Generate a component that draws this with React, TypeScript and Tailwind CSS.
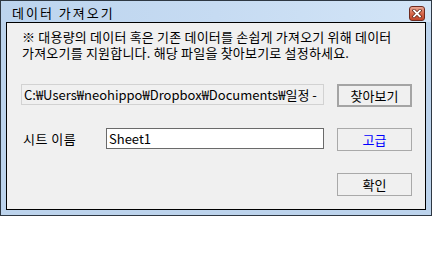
import React from "react";

const font = "font-['Noto_Sans_CJK_KR','Noto_Sans',sans-serif]";

function CloseButton() {
  return (
    <div className="w-[16px] h-[15px] rounded-[3px] border border-[#6e2a1e] bg-gradient-to-b from-[#e9a693] via-[#d6694d] to-[#c0452a] flex items-center justify-center">
      <svg width="10" height="9" viewBox="0 0 10 9">
        <path d="M2 1.5 L8 7.5 M8 1.5 L2 7.5" stroke="#5a2014" strokeWidth="3.2" strokeLinecap="square" />
        <path d="M2 1.5 L8 7.5 M8 1.5 L2 7.5" stroke="#ffffff" strokeWidth="1.8" strokeLinecap="square" />
      </svg>
    </div>
  );
}

function WinButton({ label, thick, blue }: { label: string; thick?: boolean; blue?: boolean }) {
  return (
    <button
      className={`w-[75px] h-[23px] bg-[#f0f0f0] flex items-center justify-center text-[13px] leading-[15px] ${
        thick ? "border-2 border-[#a4a4a4]" : "border border-[#a9a9a9]"
      } ${blue ? "text-[#0000ff]" : "text-black"}`}
    >
      {label}
    </button>
  );
}

export default function App() {
  return (
    <div className={`w-[432px] h-[276px] bg-white ${font}`}>
      <div className="w-[432px] h-[216px] border border-[#2e3843] bg-[#bcd3ec] flex flex-col">
        {/* title bar */}
        <div className="h-[21px] flex items-center justify-between pl-[11px] pr-[6px] bg-gradient-to-r from-[#bcd4ee] via-[#c6dbf2] to-[#d3e5f7]">
          <span className="text-[13px] leading-[15px] tracking-[2px] text-black pt-[1px]">데이터 가져오기</span>
          <div className="pt-[4px]">
            <CloseButton />
          </div>
        </div>

        {/* client area */}
        <div className="mx-[5px] mb-[5px] h-[188px] border border-black bg-[#f0f0f0] flex flex-col text-black">
          <div className="pl-[15px] pt-[6px] text-[13px] leading-[16px] tracking-[0.2px]">
            <div>※ 대용량의 데이터 혹은 기존 데이터를 손쉽게 가져오기 위해 데이터</div>
            <div>가져오기를 지원합니다. 해당 파일을 찾아보기로 설정하세요.</div>
          </div>

          <div className="mt-[23px] pl-[14px] flex items-start gap-[13px]">
            <div className="w-[303px] h-[21px] border border-[#d2d2d2] bg-[#f0f0f0] px-[2px] flex items-center overflow-hidden whitespace-nowrap text-[13px] leading-[15px]">
              C:₩Users₩neohippo₩Dropbox₩Documents₩일정 -
            </div>
            <WinButton label="찾아보기" thick />
          </div>

          <div className="mt-[21px] pl-[14px] flex items-start">
            <span className="w-[85px] h-[21px] pl-[2px] flex items-center text-[13px] leading-[15px] tracking-[0.5px]">시트 이름</span>
            <div className="w-[218px] h-[21px] border border-[#6a6a6a] bg-white px-[2px] flex items-center text-[13px] leading-[15px]">
              Sheet1
            </div>
            <div className="ml-[13px]">
              <WinButton label="고급" blue />
            </div>
          </div>

          <div className="mt-[22px] pl-[330px] flex">
            <WinButton label="확인" />
          </div>
        </div>
      </div>
    </div>
  );
}
